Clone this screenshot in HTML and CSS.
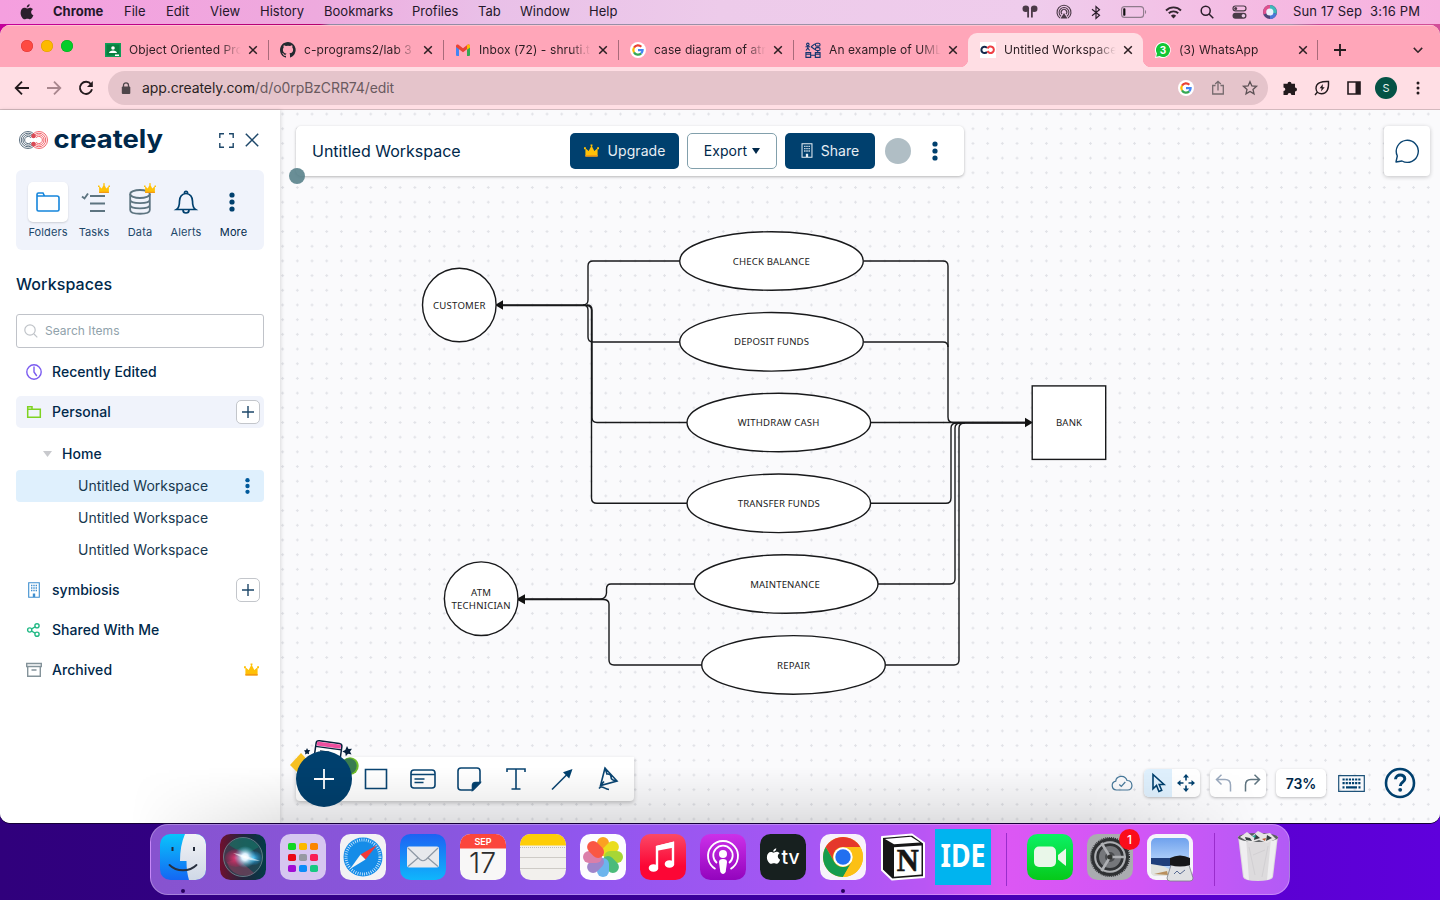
FILE: index.html
```html
<!DOCTYPE html>
<html lang="en">
<head>
<meta charset="utf-8">
<title>Untitled Workspace</title>
<link rel="stylesheet" href="styles.css">
</head>
<body>
<svg class="defs" width="0" height="0">
  <defs>
    <symbol id="crown" viewBox="0 0 16 14"><path fill="#ffc107" d="M1.500 12.500V4L5 7 8 1l3 6 3.500-3v8.500z"/><path fill="#ffc107" d="M0 3h2v2H0zM7 0h2v2H7zM14 3h2v2h-2z"/><path fill="#f39a12" d="M1.500 11.200h13V13h-13z"/></symbol>
    <symbol id="close" viewBox="0 0 10 10"><path d="M1.200 1.200l7.600 7.600M8.800 1.200L1.200 8.800" stroke="#2b1e22" stroke-width="1.500" fill="none"/></symbol>
    <symbol id="google" viewBox="0 0 16 16"><circle cx="8" cy="8" r="8" fill="#fff"/><g fill="none" stroke-width="2.200"><path stroke="#ea4335" d="M4 5.600A4.600 4.600 0 0 1 11.300 4.700"/><path stroke="#fbbc05" d="M4 5.600a4.700 4.700 0 0 0 0 4.800"/><path stroke="#34a853" d="M4 10.400a4.600 4.600 0 0 0 7.200 1"/><path stroke="#4285f4" d="M8 8.200h4.600a4.600 4.600 0 0 1-1.400 3.200"/></g></symbol>
    <symbol id="building" viewBox="0 0 12 16"><path d="M.7.7h10.600v14.600H.7z" fill="none" stroke="currentColor" stroke-width="1.100"/><path d="M3 3.500h1.400M5.300 3.500h1.400M7.600 3.500H9M3 6h1.400M5.300 6h1.400M7.600 6H9M3 8.500h1.400M5.300 8.500h1.400M7.600 8.500H9" stroke="currentColor" stroke-width="1.400"/><path d="M4.800 11.500h2.400V15H4.800z" fill="currentColor"/></symbol>
    <symbol id="dots" viewBox="0 0 6 20"><circle cx="3" cy="3" r="2.600"/><circle cx="3" cy="10" r="2.600"/><circle cx="3" cy="17" r="2.600"/></symbol>
    <symbol id="apple" viewBox="0 0 14 16"><path d="M9.700.2c.1 1.800-1.300 3.300-3 3.300C6.500 1.900 8 .4 9.700.2zM7 4.500c.7 0 1.700-.8 3-.8 1 0 2.200.5 2.900 1.500-2.600 1.600-2.100 5 .5 6.100-.6 1.700-2 4-3.300 4-.9 0-1.500-.6-2.700-.6s-1.900.6-2.800.6C2.900 15.300.6 12 .6 8.900c0-3.200 1.900-5.100 3.800-5.100 1.100 0 2 .7 2.600.7z"/></symbol>
  </defs>
</svg>

<div class="desktop">
  <header class="menubar">
    <svg class="apple" width="14" height="16"><use href="#apple"/></svg>
    <nav class="menus">
      <b>Chrome</b><span>File</span><span>Edit</span><span>View</span><span>History</span><span>Bookmarks</span><span>Profiles</span><span>Tab</span><span>Window</span><span>Help</span>
    </nav>
    <div class="status">
      <svg width="16" height="14" viewBox="0 0 16 14" fill="#4b3a48"><circle cx="3.800" cy="3.800" r="3.300"/><circle cx="12.200" cy="3.800" r="3.300"/><path d="M4.500 5H7v7.500H5.200V6zM9 5h2.500v1l-.7.500v6H9z"/></svg>
      <svg width="16" height="16" viewBox="0 0 16 16" fill="none" stroke="#4b3a48" stroke-width="1.100"><path d="M4 14A7 7 0 1 1 12 14M5 12.200a4.900 4.900 0 1 1 6 0M6 10.200a2.800 2.800 0 1 1 4 0"/><path d="M4.500 14.500L8 9l3.500 5.500z" fill="#4b3a48" stroke="none"/></svg>
      <svg width="10" height="15" viewBox="0 0 10 15" fill="none" stroke="#2b1e2b" stroke-width="1.200"><path d="M1 4.300l7.500 6L5 13.500v-12l3.500 3.200L1 10.700"/></svg>
      <svg width="26" height="12" viewBox="0 0 26 12"><rect x=".6" y=".6" width="22" height="10.800" rx="3" fill="none" stroke="#8f7b8c" stroke-width="1.100"/><rect x="2.200" y="2.200" width="2.200" height="7.600" rx=".8" fill="#111"/><path d="M24 4v4c1.500-.6 1.500-3.400 0-4z" fill="#8f7b8c"/></svg>
      <svg width="17" height="13" viewBox="0 0 17 13" fill="none" stroke="#33262f" stroke-width="1.900"><path d="M1 4.500a10.600 10.600 0 0 1 15 0M3.800 7.300a6.700 6.700 0 0 1 9.400 0"/><path d="M8.500 12.500L5.900 9.700a3.700 3.700 0 0 1 5.200 0z" fill="#33262f" stroke="none"/></svg>
      <svg width="14" height="14" viewBox="0 0 14 14" fill="none" stroke="#2b1e2b" stroke-width="1.500"><circle cx="5.700" cy="5.700" r="4.500"/><path d="M9 9l4.300 4.300"/></svg>
      <svg width="15" height="14" viewBox="0 0 15 14"><rect x="1" y="1" width="13" height="4.800" rx="2.400" fill="none" stroke="#4b3a48" stroke-width="1.200"/><circle cx="3.700" cy="3.400" r="1.500" fill="#4b3a48"/><rect x=".5" y="7.800" width="14" height="6" rx="3" fill="#4b3a48"/><circle cx="11.400" cy="10.800" r="1.800" fill="#e9c9e6"/></svg>
      <svg width="14" height="14" viewBox="0 0 14 14"><circle cx="7" cy="7" r="7" fill="#4d4478"/><path d="M.6 9.500A7 7 0 0 1 7 0v7z" fill="#e0508e"/><path d="M7 0a7 7 0 0 1 6.500 9L7 7z" fill="#3fb9ba"/><path d="M13.500 9a7 7 0 0 1-6.500 5V7z" fill="#4a77d8"/><circle cx="6.800" cy="7" r="3.600" fill="#e9f2fb"/></svg>
      <span class="date">Sun 17 Sep</span><span class="time">3:16 PM</span>
    </div>
  </header>

  <main class="window">
    <div class="tabstrip">
      <div class="lights"><i class="red"></i><i class="amber"></i><i class="green"></i></div>
      <div class="tab"><svg width="16" height="16" viewBox="0 0 16 16"><path fill="#0f9d58" d="M0 1h16v14H0z"/><path fill="#087f3f" d="M1.500 2.500h13v11h-13z"/><circle cx="8" cy="6" r="1.800" fill="#fff"/><path fill="#fff" d="M4 11c0-3.500 8-3.500 8 0zM10 12.500h4V14h-4z"/></svg><span>Object Oriented Pro</span><svg class="x" width="10" height="10"><use href="#close"/></svg></div>
      <div class="tab"><svg width="16" height="16" viewBox="0 0 16 16"><path fill="#24292f" d="M8 0C3.600 0 0 3.600 0 8c0 3.500 2.300 6.500 5.500 7.600.4.100.5-.2.500-.4v-1.400c-2.200.5-2.700-1-2.700-1-.4-.9-.9-1.200-.9-1.200-.7-.5.100-.5.100-.5.800.1 1.200.8 1.200.8.700 1.200 1.900.9 2.300.7.100-.5.300-.9.500-1.100-1.800-.2-3.600-.9-3.600-4 0-.9.300-1.600.8-2.100-.1-.2-.4-1 .1-2.100 0 0 .7-.2 2.200.8a7.600 7.600 0 0 1 4 0c1.500-1 2.200-.8 2.200-.8.4 1.100.2 1.900.1 2.100.5.600.8 1.300.8 2.100 0 3.100-1.900 3.700-3.700 3.900.3.300.6.800.6 1.500v2.200c0 .2.100.5.500.4A8 8 0 0 0 8 0z"/></svg><span>c-programs2/lab 3 (</span><svg class="x" width="10" height="10"><use href="#close"/></svg></div>
      <div class="tab"><svg width="16" height="16" viewBox="0 0 16 16"><path fill="#4285f4" d="M1 4l3 2v8H2a1 1 0 0 1-1-1z"/><path fill="#34a853" d="M15 4l-3 2v8h2a1 1 0 0 0 1-1z"/><path fill="#ea4335" d="M1 4c0-1.500 1.500-2 2.500-1.200L8 6.200l4.500-3.400C13.500 2 15 2.500 15 4v1L8 10.200 1 5z"/><path fill="#fbbc04" d="M12 3.200c1-1 3-.7 3 .8v1.500l-3 2.200z"/></svg><span>Inbox (72) - shruti.t</span><svg class="x" width="10" height="10"><use href="#close"/></svg></div>
      <div class="tab"><svg width="16" height="16"><use href="#google"/></svg><span>case diagram of atm</span><svg class="x" width="10" height="10"><use href="#close"/></svg></div>
      <div class="tab last"><svg width="16" height="17" viewBox="0 0 17 17" fill="none" stroke="#14366f" stroke-width="1.200"><circle cx="3" cy="2" r="1.300"/><path d="M3 3v3M.5 4.500h5M3 6L1 8.500M3 6l2 2.500M6.500 4.500l4-3M6.500 4.500l4 3"/><rect x="11" y=".8" width="5" height="3" rx="1.500"/><rect x="11" y="5.500" width="5" height="3" rx="1.500"/><path d="M1 10.800h5v5H1zM11 10.800h5v5h-5zM1 12.500h5M11 12.500h5M6 13.500h5M13.500 8.500v2"/></svg><span>An example of UML</span><svg class="x" width="10" height="10"><use href="#close"/></svg></div>
      <div class="tab active"><svg width="16" height="16" viewBox="0 0 16 16"><path fill="#fff" d="M0 0h16v16H0z"/><path d="M7 5.800A3.200 3.200 0 1 0 7 10" fill="none" stroke="#14284b" stroke-width="2"/><path d="M7.500 9a3.300 3.300 0 1 0 0-2.500" fill="none" stroke="#ef3f45" stroke-width="2"/></svg><span>Untitled Workspace</span><svg class="x" width="10" height="10"><use href="#close"/></svg></div>
      <div class="tab plain"><svg width="16" height="16" viewBox="0 0 16 16"><path fill="#fff" d="M8 0a8 8 0 1 1-3.600 15.200L0 16l1-4A8 8 0 0 1 8 0z"/><path fill="#12c636" d="M8 1a7 7 0 1 1-3.400 13.100L1.200 14.800l.8-3.200A7 7 0 0 1 8 1z"/><text x="8" y="11.600" text-anchor="middle" font-size="10" font-weight="700" fill="#fff">3</text></svg><span>(3) WhatsApp</span><svg class="x" width="10" height="10"><use href="#close"/></svg></div>
      <svg class="newtab" width="12" height="12" viewBox="0 0 12 12"><path d="M6 0v12M0 6h12" stroke="#231a1d" stroke-width="1.800"/></svg>
      <svg class="chev" width="10" height="7" viewBox="0 0 10 7"><path d="M.8.900L5 5.200 9.200.9" stroke="#33262a" stroke-width="1.600" fill="none"/></svg>
    </div>

    <div class="toolbar">
      <div class="navs">
        <svg width="16" height="16" viewBox="0 0 16 16" fill="none" stroke="#231a1d" stroke-width="1.800"><path d="M15 8H2M8 1.700L1.700 8 8 14.300"/></svg>
        <svg width="16" height="16" viewBox="0 0 16 16" fill="none" stroke="#a8868d" stroke-width="1.800"><path d="M1 8h13M8 1.700L14.300 8 8 14.300"/></svg>
        <svg width="16" height="16" viewBox="0 0 16 16"><path d="M13 4.200A6.100 6.100 0 1 0 14 9.300" fill="none" stroke="#231a1d" stroke-width="1.900"/><path d="M14.800 1v6H9z" fill="#231a1d"/></svg>
      </div>
      <div class="url">
        <svg width="10" height="13" viewBox="0 0 10 13"><rect x=".8" y="4.500" width="8.500" height="7.500" rx="1" fill="#4e464a"/><path d="M2.500 5V3.300a2.500 2.500 0 0 1 5 0V5" fill="none" stroke="#4e464a" stroke-width="1.300"/></svg>
        <span class="addr">app.creately.com<i>/d/o0rpBzCRR74/edit</i></span>
        <svg class="g" width="16" height="16"><use href="#google"/></svg>
        <svg class="s" width="14" height="16" viewBox="0 0 14 16" fill="none" stroke="#756a6e" stroke-width="1.300"><path d="M4.500 5.500H1.700V14h10.600V5.500H9.500M7 10.500V1.500M4.200 4L7 1.300 9.800 4"/></svg>
        <svg width="16" height="16" viewBox="0 0 16 16"><path d="M8 1.700l1.900 4.200 4.600.4-3.500 3.100 1 4.500L8 11.500l-4 2.400 1-4.500L1.500 6.300l4.600-.4z" fill="none" stroke="#5c5155" stroke-width="1.300"/></svg>
      </div>
      <div class="exts">
        <svg width="16" height="16" viewBox="0 0 16 16" fill="#231a1d"><path d="M1.500 3.700h4a2 2 0 1 1 4 0h3.500V7.500a2 2 0 1 1 0 4V15H9.400a1.900 1.900 0 1 0-3.800 0H1.500v-4a1.800 1.800 0 1 0 0-3.600z"/></svg>
        <svg width="16" height="16" viewBox="0 0 16 16" fill="none" stroke="#231a1d" stroke-width="1.400"><path d="M14.500 1.500C8 1.200 2 2.500 2 8.500a5.500 5.500 0 0 0 5.500 5.200c5.500 0 7.500-4.700 7-12.200zM1 15l2.500-3"/><path d="M8.800 4L5.600 8.300h2L7 11.500l3.700-4.300h-2z" fill="#231a1d" stroke="none"/></svg>
        <svg width="14" height="14" viewBox="0 0 14 14"><path d="M1 1h12v12H1z" fill="none" stroke="#231a1d" stroke-width="1.600"/><path d="M8.500 1H13v12H8.500z" fill="#231a1d"/></svg>
        <div class="me">S</div>
        <svg width="4" height="14" viewBox="0 0 4 14" fill="#231a1d"><circle cx="2" cy="2" r="1.500"/><circle cx="2" cy="7" r="1.500"/><circle cx="2" cy="12" r="1.500"/></svg>
      </div>
    </div>

    <div class="app">
      <aside class="sidebar">
        <div class="brand">
          <svg width="148" height="32" viewBox="0 0 148 32">
            <g fill="none" stroke-width=".9"><g stroke="#4a5f70"><path d="M18 10A8.500 8.500 0 1 0 18 22"/><path d="M17 11.300A6.800 6.800 0 1 0 17 20.700"/><path d="M16 12.500A5.200 5.200 0 1 0 16 19.500"/><path d="M15 13.700A3.600 3.600 0 1 0 15 18.300"/></g><g stroke="#f0525a"><path d="M17 22a8.500 8.500 0 1 0 0-12"/><path d="M18 20.700a6.800 6.800 0 1 0 0-9.400"/><path d="M19 19.500a5.200 5.200 0 1 0 0-7"/><path d="M20 18.300a3.600 3.600 0 1 0 0-4.600"/></g></g><circle cx="17.500" cy="12" r="2.300" fill="#d94a55"/><circle cx="17.500" cy="20" r="2.300" fill="#d94a55"/>
            <text x="37.500" y="23.500" class="wordmark" textLength="109.500" lengthAdjust="spacingAndGlyphs">creately</text>
          </svg>
          <svg width="15" height="15" viewBox="0 0 15 15" fill="none" stroke="#1d4769" stroke-width="1.400"><path d="M.8 5V.8H5M10 .8h4.200V5M14.200 10v4.200H10M5 14.200H.8V10"/></svg>
          <svg width="14" height="14" viewBox="0 0 14 14" stroke="#1d4769" stroke-width="1.500"><path d="M.8.800l12.400 12.400M13.200.8L.8 13.200"/></svg>
        </div>
        <div class="apps">
          <div class="item"><div class="pic on"><svg width="24" height="20" viewBox="0 0 24 20" fill="none" stroke="#1585db" stroke-width="1.600"><path d="M1 17.500V2.500Q1 1 2.500 1H7l1.500 3H21q2 0 2 2v11.500q0 1.500-1.500 1.500h-19Q1 19 1 17.500zM1 4h8"/></svg></div><span>Folders</span></div>
          <div class="item"><div class="pic"><svg width="26" height="24" viewBox="0 0 26 24" fill="none" stroke="#5d7480" stroke-width="1.900"><path d="M9 6h15M9 13.500h15M9 21h15M1 6.500l2.500 2L7 3.500"/></svg><svg class="badge" width="12" height="11"><use href="#crown"/></svg></div><span>Tasks</span></div>
          <div class="item"><div class="pic"><svg width="22" height="26" viewBox="0 0 22 26" fill="none" stroke="#5d7480" stroke-width="1.800"><ellipse cx="11" cy="5" rx="9.800" ry="4"/><path d="M1.200 5v16c0 5 19.600 5 19.600 0V5M1.200 10.500c0 4.800 19.600 4.800 19.600 0M1.200 15.800c0 4.800 19.600 4.800 19.600 0"/></svg><svg class="badge" width="12" height="11"><use href="#crown"/></svg></div><span>Data</span></div>
          <div class="item"><div class="pic"><svg width="22" height="24" viewBox="0 0 22 24" fill="none" stroke="#00406e" stroke-width="1.700"><path d="M1.500 19.500c2.500-1.600 3-4 3-8.500 0-4 2.500-7.500 6.500-7.500s6.500 3.500 6.500 7.500c0 4.500.5 6.900 3 8.500zM8 20c0 4 6 4 6 0M9.500 3.500c-.5-3 3.500-3 3 0"/></svg></div><span>Alerts</span></div>
          <div class="item more"><div class="pic"><svg width="6" height="20" fill="#00406e"><use href="#dots"/></svg></div><span>More</span></div>
        </div>
        <h2>Workspaces</h2>
        <div class="search"><svg width="14" height="14" viewBox="0 0 14 14" fill="none" stroke="#bfc3c8" stroke-width="1.200"><circle cx="6" cy="6" r="5.200"/><path d="M10 10l3.300 3.300"/></svg><span>Search Items</span></div>
        <div class="row"><svg width="16" height="16" viewBox="0 0 16 16" fill="none" stroke="#7b5cf0" stroke-width="1.400"><circle cx="8" cy="8" r="7.200"/><path d="M8 2.500V8l2.800 4"/></svg><b>Recently Edited</b></div>
        <div class="row sel"><svg width="16" height="16" viewBox="0 0 16 16" fill="none" stroke="#7ed321" stroke-width="1.500"><path d="M1.700 13.300V2.700H6v2.500h8.300v8.100zM1.700 5.200H6"/></svg><b>Personal</b><div class="plus"><svg width="12" height="12" viewBox="0 0 12 12"><path d="M6 0v12M0 6h12" stroke="#1d4769" stroke-width="1.400"/></svg></div></div>
        <div class="row home"><svg width="9" height="6" viewBox="0 0 9 6"><path d="M0 0h9L4.500 6z" fill="#c8c9cd"/></svg><b>Home</b></div>
        <div class="ws cur"><span>Untitled Workspace</span><svg width="5" height="18" fill="#005a9c"><use href="#dots"/></svg></div>
        <div class="ws"><span>Untitled Workspace</span></div>
        <div class="ws"><span>Untitled Workspace</span></div>
        <div class="row sym"><svg width="16" height="16" color="#3f8fd0"><use href="#building"/></svg><b>symbiosis</b><div class="plus"><svg width="12" height="12" viewBox="0 0 12 12"><path d="M6 0v12M0 6h12" stroke="#1d4769" stroke-width="1.400"/></svg></div></div>
        <div class="row"><svg width="16" height="16" viewBox="0 0 16 16" fill="none" stroke="#22b985" stroke-width="1.400"><circle cx="3.700" cy="8" r="2.100"/><circle cx="11" cy="3.800" r="2.100"/><circle cx="11" cy="12.200" r="2.100"/><path d="M5.500 7l3.600-2.200M5.500 9l3.600 2.200"/></svg><b>Shared With Me</b></div>
        <div class="row"><svg width="16" height="16" viewBox="0 0 16 16" fill="none" stroke="#84939a" stroke-width="1.400"><path d="M.7 1.500h14.600v3H.7zM1.700 4.500h12.600v9.800H1.700zM5.500 8h5"/></svg><b>Archived</b><svg class="rcrown" width="15" height="14"><use href="#crown"/></svg></div>
      </aside>

      <section class="canvas">
        <svg class="diagram" width="1160" height="713" viewBox="280 110 1160 713">
          <g class="wire">
            <path d="M680 261H593Q588 261 588 266V300Q588 305 583 305H500"/>
            <path d="M680 342H593Q588 342 588 337V310Q588 305 583 305"/>
            <path d="M687 422.500H597Q592 422.500 592 417.500V310Q592 305 587 305"/>
            <path d="M687 503.300H597Q591.500 503.300 591.500 498V310Q591.500 305.500 586 305.500H500"/>
            <path d="M864 261H943Q948 261 948 266V417Q948 422.500 953 422.500H1028"/>
            <path d="M864 342H943Q948 342 948 347"/>
            <path d="M871 422.500H1028"/>
            <path d="M871 503.300H946Q951 503.300 951 498V428Q951 423 957 423H1028"/>
            <path d="M878 584H950Q955 584 955 579V428Q955 423 961 423"/>
            <path d="M885.500 665H954Q959 665 959 660V428Q959 423 965 423"/>
            <path d="M695 584H611Q606.500 584 606.500 589V593Q606 599 600 599H520"/>
            <path d="M702 665H614Q609 665 609 660V604Q609 599.500 603 599.500H520"/>
          </g>
          <path class="heads" d="M495 305l8-4.800v9.600zM1033 422.500l-8-4.800v9.600zM516 599.300l9-5v10z"/>
          <g class="shape">
            <circle cx="459.300" cy="305" r="36.800"/><path d="M0 0"/><circle cx="481.200" cy="598.700" r="36.800"/>
            <ellipse cx="771.500" cy="261" rx="91.800" ry="29.300"/><ellipse cx="771.500" cy="341.800" rx="91.800" ry="29.300"/>
            <ellipse cx="778.800" cy="422.500" rx="91.800" ry="29.300"/><ellipse cx="778.800" cy="503.300" rx="91.800" ry="29.300"/>
            <ellipse cx="786.200" cy="584" rx="91.800" ry="29.300"/><ellipse cx="793.500" cy="664.900" rx="91.800" ry="29.300"/>
            <rect x="1032.200" y="385.900" width="73.500" height="73.500"/>
          </g>
          <g class="label">
            <text x="459.300" y="308.600" textLength="52.500">CUSTOMER</text><text x="481" y="596" textLength="20">ATM</text><text x="481" y="608.800" textLength="59">TECHNICIAN</text>
            <text x="771.300" y="264.600" textLength="77">CHECK BALANCE</text><text x="771.500" y="345.400" textLength="75">DEPOSIT FUNDS</text><text x="778.500" y="426.100" textLength="81.500">WITHDRAW CASH</text><text x="778.800" y="506.900" textLength="82">TRANSFER FUNDS</text><text x="785" y="587.700" textLength="69.500">MAINTENANCE</text><text x="793.500" y="668.500" textLength="33">REPAIR</text><text x="1069" y="426.100" textLength="26">BANK</text>
          </g>
        </svg>

        <div class="top">
          <div class="docbar">
            <span class="title">Untitled Workspace</span>
            <button class="btn up"><svg width="15" height="14"><use href="#crown"/></svg>Upgrade</button>
            <button class="btn ex">Export<svg width="8" height="6" viewBox="0 0 8 6"><path d="M0 0h8L4 6z" fill="#00284a"/></svg></button>
            <button class="btn sh"><svg width="12" height="15"><use href="#building"/></svg>Share</button>
            <i class="avatar"></i>
            <svg width="6" height="20" fill="#00406e"><use href="#dots"/></svg>
            <i class="presence"></i>
          </div>
          <div class="comment"><svg width="26" height="26" viewBox="0 0 26 26"><path d="M2 24l1.300-6A11 11 0 1 1 8 23z" fill="none" stroke="#0b4572" stroke-width="1.400" stroke-linejoin="round"/></svg></div>
        </div>

        <div class="bottom">
          <div class="shapes">
            <svg class="decor" width="72" height="46" viewBox="0 0 72 46"><path d="M0 26L11 14 22 26 11 37z" fill="#f6c021"/><g transform="rotate(8 37 20)"><rect x="24" y="3" width="26" height="40" rx="3" fill="#fff" stroke="#06213d" stroke-width="1.500"/><path d="M25 4h24v4H25z" fill="#ed4f9f"/><path d="M24 9h26M29 13h9" stroke="#06213d" stroke-width="1.300"/></g><path d="M57 7l1.500 3 3.500-.3-2 2.800 1.500 3-3.500-.7-2.200 2.400-.5-3.200-3-1.500 3-1.400zM17 9l1 2 2.300.2-1.500 1.800.3 2.200-2-.8-2 1 .2-2.200-1.300-1.600 2.100-.5z" fill="#06213d"/><circle cx="60" cy="27" r="8.700" fill="#6fbe27"/><circle cx="59" cy="27" r="7.700" fill="#397c50"/></svg>
            <div class="fab"><svg width="20" height="20" viewBox="0 0 20 20"><path d="M10 0v20M0 10h20" stroke="#fff" stroke-width="1.800"/></svg></div>
            <svg width="24" height="24" viewBox="0 0 24 24"><path d="M1.500 2.500h21v19h-21z"/></svg>
            <svg width="26" height="24" viewBox="0 0 26 24"><rect x="1" y="3" width="24" height="18" rx="3"/><path d="M1 7.500h24M4.500 12h10M4.500 15.500h9"/></svg>
            <svg width="24" height="24" viewBox="0 0 24 24"><path d="M4 1h16q3 0 3 3v12l-7 7H4q-3 0-3-3V4q0-3 3-3z"/><path d="M23 15.500L15.500 23v-4.500q0-3 3-3z" fill="#00406e"/></svg>
            <svg width="22" height="24" viewBox="0 0 22 24"><path d="M2 5V2h18v3M11 2v20M6.500 22h9"/></svg>
            <svg width="24" height="24" viewBox="0 0 24 24"><path d="M2 22.500L17 7.500"/><path d="M22.500 2l-3.300 9.500-6.200-6.200z" fill="#00406e" stroke="none"/></svg>
            <svg width="22" height="24" viewBox="0 0 22 24"><path d="M8 1L3.500 18.500 20 14zM8 1l2 6q4-.5 4 3t6 4M3.500 18.500l3.500-4M2 21.500c3-4 5 .5 10 1"/></svg>
          </div>
          <div class="views">
            <svg width="22" height="18" viewBox="0 0 22 18" fill="none" stroke="#47799b" stroke-width="1.200"><path d="M5.500 16a4.500 4.500 0 0 1-.7-8.900C5 2.500 13.500-.5 16 6.500c6 0 7 9.500.5 9.500zM8.300 10.500l2 2 4-4.500"/></svg>
            <div class="group"><div class="cell hot"><svg width="14" height="20" viewBox="0 0 14 20"><path d="M2 1.500v14.300l3.500-3.300 2.400 6 2.800-1.200-2.500-5.800H13z" fill="none" stroke="#00406e" stroke-width="1.600"/></svg></div><div class="cell"><svg width="18" height="18" viewBox="0 0 18 18"><path d="M9 2.500V6.500M9 11.500v4M2.500 9h4M11.500 9h4" stroke="#00406e" stroke-width="1.600"/><path d="M9 0l3 3.500H6zM9 18l3-3.500H6zM0 9l3.500-3v6zM18 9l-3.500-3v6z" fill="#00406e"/></svg></div></div>
            <div class="group"><div class="cell"><svg width="18" height="18" viewBox="0 0 18 18" fill="none" stroke="#9aa9bd" stroke-width="1.500"><path d="M6.500.8L1.500 5.500l5 5M1.500 5.500H10q5.500 0 5.500 5.500v6.500"/></svg></div><div class="cell"><svg width="18" height="18" viewBox="0 0 18 18" fill="none" stroke="#5f747f" stroke-width="1.500"><path d="M11.500.8l5 4.700-5 5M16.500 5.500H8Q2.500 5.500 2.500 11v6.500"/></svg></div></div>
            <div class="group pct">73%</div>
            <svg class="kbd" width="27" height="17" viewBox="0 0 27 17"><path d="M.7.700h25.600v15.600H.7z" fill="none" stroke="#1d5279" stroke-width="1.200"/><path d="M4.500 4.500h18M4.500 8.200h18" stroke="#00406e" stroke-width="2.200" stroke-dasharray="2.200 .95"/><path d="M4.500 12.300h2M8 12.300h11M20.500 12.300h2" stroke="#00406e" stroke-width="2.200"/></svg>
            <svg width="32" height="32" viewBox="0 0 32 32"><circle cx="16" cy="16" r="14" fill="none" stroke="#00406e" stroke-width="2.600"/><path d="M11.500 12.300c.2-5.800 9.500-5.500 9.300-.3-.1 3.200-4.500 3.200-4.500 7" fill="none" stroke="#00406e" stroke-width="3"/><circle cx="16.200" cy="22.800" r="1.900" fill="#00406e"/></svg>
          </div>
        </div>
      </section>
      <div class="dockshade"></div>
    </div>
  </main>

  <footer class="dock">
    <div class="app-icon run"><svg viewBox="0 0 46 46"><defs><linearGradient id="fb" x2="0" y2="1"><stop stop-color="#09c4fb"/><stop offset="1" stop-color="#1467f3"/></linearGradient><linearGradient id="fw" x2="0" y2="1"><stop stop-color="#f2f3f6"/><stop offset="1" stop-color="#cfd8e6"/></linearGradient></defs><rect width="46" height="46" rx="10.500" fill="url(#fb)"/><path d="M25 0h10.500A10.500 10.500 0 0 1 46 10.500v25A10.500 10.500 0 0 1 35.500 46H29c-1.500-5-2.500-11-2.500-19H20C20 17 21.500 8 25 0z" fill="url(#fw)"/><path d="M12.500 13v4M34 13v4" stroke="#222a38" stroke-width="2"/><path d="M9.500 31c7 7 20 7 27 0" fill="none" stroke="#27303f" stroke-width="1.800" stroke-linecap="round"/></svg></div>
    <div class="app-icon"><svg viewBox="0 0 46 46"><defs><linearGradient id="s1"><stop stop-color="#70102f"/><stop offset=".5" stop-color="#22243c"/><stop offset="1" stop-color="#033c48"/></linearGradient><radialGradient id="s2"><stop stop-color="#fff"/><stop offset=".3" stop-color="#dff3ff"/><stop offset="1" stop-color="#48bce0" stop-opacity="0"/></radialGradient><radialGradient id="s3"><stop stop-color="#f03b78"/><stop offset="1" stop-color="#c81d58" stop-opacity=".2"/></radialGradient><radialGradient id="s4"><stop stop-color="#49c8ff"/><stop offset="1" stop-color="#177bb8" stop-opacity=".2"/></radialGradient></defs><rect width="46" height="46" rx="10.500" fill="url(#s1)"/><circle cx="23" cy="23" r="19.500" fill="#2c5661" fill-opacity=".55" stroke="#7d9aa0" stroke-width=".7"/><path d="M9 11C17 0 31 2 39 13L25 21z" fill="#127b68" opacity=".55"/><path d="M18 25l16 14C24 46 9 39 7 28z" fill="#a0405f" opacity=".45"/><ellipse cx="16" cy="24" rx="11" ry="9" fill="url(#s3)"/><ellipse cx="33" cy="24" rx="9" ry="7" fill="url(#s4)"/><circle cx="25" cy="23" r="11" fill="url(#s2)"/><path d="M13 19q12 2 27 8-13 0-27-8z" fill="#fff" opacity=".6"/></svg></div>
    <div class="app-icon"><svg viewBox="0 0 46 46"><rect width="46" height="46" rx="10.500" fill="#d6c6f0"/><g><rect x="8" y="9" width="8" height="7" rx="1.800" fill="#10d624"/><rect x="19" y="9" width="8" height="7" rx="1.800" fill="#fcb900"/><rect x="30" y="9" width="8" height="7" rx="1.800" fill="#fb8600"/><rect x="8" y="20" width="8" height="7" rx="1.800" fill="#ea0716"/><rect x="19" y="20" width="8" height="7" rx="1.800" fill="#9699a3"/><rect x="30" y="20" width="8" height="7" rx="1.800" fill="#f91c54"/><rect x="8" y="31" width="8" height="7" rx="1.800" fill="#a10cd5"/><rect x="19" y="31" width="8" height="7" rx="1.800" fill="#0d8cf8"/><rect x="30" y="31" width="8" height="7" rx="1.800" fill="#16c982"/></g></svg></div>
    <div class="app-icon"><svg viewBox="0 0 46 46"><rect width="46" height="46" rx="10.500" fill="#f3f2f4"/><circle cx="23" cy="23" r="19.500" fill="#158ce8"/><circle cx="23" cy="23" r="17" fill="none" stroke="#d8efff" stroke-width="3" stroke-dasharray=".8 1.430"/><path d="M37 11L25.500 25.500l-5-5z" fill="#f23b38"/><path d="M10 35l10.500-14.500 5 5z" fill="#f4f4f4"/></svg></div>
    <div class="app-icon"><svg viewBox="0 0 46 46"><defs><linearGradient id="ml" x2="0" y2="1"><stop stop-color="#1d62f3"/><stop offset="1" stop-color="#0fb6fc"/></linearGradient></defs><rect width="46" height="46" rx="10.500" fill="url(#ml)"/><rect x="7" y="12.500" width="32" height="21" rx="2" fill="#e7e9ed"/><path d="M8 14l12 11.500q3 2.500 6 0L38 14M8 32.500l10.500-9M38 32.500l-10.500-9" fill="none" stroke="#8d98a5" stroke-width="1.200"/></svg></div>
    <div class="app-icon"><svg viewBox="0 0 46 46"><rect width="46" height="46" rx="10.500" fill="#f8f7f7"/><path d="M0 14.500v-4A10.500 10.500 0 0 1 10.500 0h25A10.500 10.500 0 0 1 46 10.500v4z" fill="#fb463c"/><text x="23" y="11.300" text-anchor="middle" font-size="9" font-weight="600" fill="#fff">SEP</text><text x="22.500" y="38.500" text-anchor="middle" font-size="29" font-weight="300" fill="#2c2c2e" textLength="27" lengthAdjust="spacingAndGlyphs">17</text></svg></div>
    <div class="app-icon"><svg viewBox="0 0 46 46"><rect width="46" height="46" rx="10.500" fill="#f2f0ed"/><path d="M0 11.500v-1A10.500 10.500 0 0 1 10.500 0h25A10.500 10.500 0 0 1 46 10.500v1z" fill="#fecd06"/><path d="M0 13.500h46" stroke="#c1bdb2" stroke-width="1" stroke-dasharray="1 1"/><path d="M0 23.500h46M0 34.500h46" stroke="#cecbc6"/></svg></div>
    <div class="app-icon"><svg viewBox="0 0 46 46"><rect width="46" height="46" rx="10.500" fill="#fdfcff"/><g transform="translate(23 23)" opacity=".95"><rect x="-6" y="-20" width="12" height="19" rx="6" fill="#fb9d17"/><rect x="-6" y="-20" width="12" height="19" rx="6" fill="#e9dc13" transform="rotate(45)"/><rect x="-6" y="-20" width="12" height="19" rx="6" fill="#a3d42b" transform="rotate(90)"/><rect x="-6" y="-20" width="12" height="19" rx="6" fill="#42b874" transform="rotate(135)"/><rect x="-6" y="-20" width="12" height="19" rx="6" fill="#65b1ed" transform="rotate(180)"/><rect x="-6" y="-20" width="12" height="19" rx="6" fill="#9b7fc9" transform="rotate(225)"/><rect x="-6" y="-20" width="12" height="19" rx="6" fill="#da79a5" transform="rotate(270)"/><rect x="-6" y="-20" width="12" height="19" rx="6" fill="#fa4f39" transform="rotate(315)"/></g></svg></div>
    <div class="app-icon"><svg viewBox="0 0 46 46"><defs><linearGradient id="mu" x2="0" y2="1"><stop stop-color="#fb4966"/><stop offset=".7" stop-color="#fc0635"/></linearGradient></defs><rect width="46" height="46" rx="10.500" fill="url(#mu)"/><path d="M17 33V13l16-4v20" fill="none" stroke="#fff" stroke-width="2.400"/><path d="M16 12l18-4.500v6L16 17z" fill="#fff"/><ellipse cx="13.500" cy="34" rx="4.800" ry="3.800" fill="#fff"/><ellipse cx="29.500" cy="30" rx="4.800" ry="3.800" fill="#fff"/></svg></div>
    <div class="app-icon"><svg viewBox="0 0 46 46"><defs><linearGradient id="po" x2="0" y2="1"><stop stop-color="#cc30e9"/><stop offset="1" stop-color="#9304bd"/></linearGradient></defs><rect width="46" height="46" rx="10.500" fill="url(#po)"/><g fill="none" stroke="#fff" stroke-width="1.800"><path d="M15.500 35a15 15 0 1 1 15 0M17 29a9.700 9.700 0 1 1 12 0"/></g><circle cx="23" cy="20" r="4" fill="#fff"/><path d="M19 28q0-3 4-3t4 3l-1.300 10q-2.700 4-5.400 0z" fill="#fff"/></svg></div>
    <div class="app-icon"><svg viewBox="0 0 46 46"><rect width="46" height="46" rx="10.500" fill="#17201f"/><svg x="6" y="14" width="15" height="16.500" fill="#fff"><use href="#apple"/></svg><text x="21.500" y="30" font-size="20" font-weight="500" fill="#fff" textLength="18" lengthAdjust="spacingAndGlyphs">tv</text></svg></div>
    <div class="app-icon run"><svg viewBox="0 0 46 46"><rect width="46" height="46" rx="10.500" fill="#f8f2fb"/><circle cx="23" cy="23" r="20" fill="#fcc015"/><path d="M5.700 13A20 20 0 0 1 40.300 13H23a10 10 0 0 0-8.700 15z" fill="#e5382b"/><path d="M5.700 13A20 20 0 0 0 23 43l8.700-15A10 10 0 0 1 14.300 28z" fill="#159c4e"/><path d="M40.300 13A20 20 0 0 1 23 43l8.700-15A10 10 0 0 0 23 13z" fill="#fcc015"/><circle cx="23" cy="23" r="9.700" fill="#fff"/><circle cx="23" cy="23" r="7.700" fill="#226ff0"/></svg></div>
    <div class="app-icon"><svg viewBox="0 0 46 46"><path d="M2 3L32 0.500 44 9V43L12 45.500 2 36z" fill="#161616" stroke="#fff" stroke-width="2" stroke-linejoin="round"/><path d="M5 5l26-2.200L40 8.500 14 10.300z" fill="#fff"/><path d="M14 13.200l27.500-1.800V40.500L14 42.800z" fill="#fff"/><text x="27.700" y="37.300" text-anchor="middle" class="serif" font-size="31" font-weight="700" fill="#161616" stroke="#161616" stroke-width=".6" textLength="22" lengthAdjust="spacingAndGlyphs">N</text></svg></div>
    <div class="app-icon ide"><svg viewBox="0 0 56 56"><text x="28" y="37.500" text-anchor="middle" textLength="45" lengthAdjust="spacingAndGlyphs">IDE</text></svg></div>
    <i class="rule"></i>
    <div class="app-icon"><svg viewBox="0 0 46 46"><defs><linearGradient id="ft" x2="0" y2="1"><stop stop-color="#0bf165"/><stop offset="1" stop-color="#06c91a"/></linearGradient></defs><rect width="46" height="46" rx="10.500" fill="url(#ft)"/><rect x="7" y="12.500" width="22" height="20.500" rx="5" fill="#e9f7e9"/><path d="M31 21q6-5 8-6.500v17.500q-2-1.500-8-6.500z" fill="#e9f7e9"/></svg></div>
    <div class="app-icon"><svg viewBox="0 0 46 46"><rect width="46" height="46" rx="10.500" fill="#aaacb0"/><circle cx="23" cy="23" r="17.500" fill="#75777b" stroke="#2e3033" stroke-width="3"/><circle cx="23" cy="23" r="19.400" fill="none" stroke="#2e3033" stroke-width="1.300" stroke-dasharray="1 1"/><circle cx="23" cy="23" r="12.500" fill="none" stroke="#303235" stroke-width="3"/><circle cx="23" cy="23" r="5" fill="#4a4c4f"/><path d="M23 23h16M23 23L14.500 9M23 23l-8.500 14" stroke="#aeb0b4" stroke-width="2.600"/><circle cx="23" cy="23" r="14.700" fill="none" stroke="#aeb0b4" stroke-width="1.800"/><circle cx="23" cy="23" r="2.500" fill="#333"/></svg><b class="count">1</b></div>
    <div class="app-icon"><svg viewBox="0 0 46 46"><defs><linearGradient id="sk" x2="0" y2="1"><stop stop-color="#6fa1ed"/><stop offset=".62" stop-color="#b2d2fa"/></linearGradient></defs><rect width="46" height="46" rx="9" fill="#f6f4fa"/><rect x="4" y="4" width="38" height="38" rx="5" fill="url(#sk)"/><path d="M4 24h38v8H4z" fill="#1f3f7b"/><path d="M4 30l12 2 6 3v7H9q-5 0-5-4z" fill="#e2e4df"/><path d="M7 40l13-3 1 4z" fill="#b98f5e"/><path d="M24 31h18l4 13q0 3-3 3H23q-3 0-3-3z" fill="#dfe0e3" stroke="#7a7e85" stroke-width=".8"/><path d="M23 24q10-5 20 0v7q-10 3-20 0z" fill="#171719"/><path d="M27 40l3-3 3 3 5-4" fill="none" stroke="#5b6c93"/></svg></div>
    <i class="rule two"></i>
    <div class="app-icon"><svg viewBox="0 0 46 52" class="trash"><path d="M3 6l5 41q1 4 15 4t15-4l5-41z" fill="#dddbdd"/><path d="M4 6l5 41q3 3 5 3L11 7zM42 6l-5 41q-3 3-5 3l4-42z" fill="#efeef0"/><ellipse cx="23" cy="7.500" rx="20" ry="4.500" fill="#5b5f62"/><path d="M5 7l7-5 5 4 6-5 6 3 6-1 6 6-9 4-8-3-9 3z" fill="#e7e5e5"/><path d="M10 7l5 1 2 3-6-1zM20 4l5 4-6 2zM32 5l5 3-6 3z" fill="#343d40"/><path d="M17 6l4-1-1 3z" fill="#22a896"/><path d="M27 9l4-1-1 3z" fill="#bd5d35"/><path d="M14 17l6 28M33 16l-6 31M18 25l12-5" stroke="#d2d0d3" stroke-width="1"/></svg></div>
  </footer>
</div>
</body>
</html>
```

FILE: styles.css
```css
* { box-sizing: border-box; }
body { margin: 0; font-family: Inter, "Liberation Sans", sans-serif; overflow: hidden; }
svg { display: block; flex: none; overflow: visible; }
svg text { font-family: Inter, sans-serif; }
i { font-style: normal; }
.defs { position: absolute; }

.desktop { width: 1440px; height: 900px; display: flex; flex-direction: column; overflow: hidden;
  background:
    linear-gradient(90deg, #c4009b 0, #b4006f 320px, #8f8ba5 330px, #a89aac 1290px, #c94798 1320px, #d24e98 100%) 0 0 / 100% 60px no-repeat,
    linear-gradient(90deg, #30007c 0, #33008b 35%, #4200ae 65%, #5b00d2 88%, #5f00dc 100%); }

/* macOS menu bar */
.menubar { height: 24px; margin-bottom: 1px; flex: none; display: flex; align-items: center; padding-left: 20px; font-size: 13px; line-height: 22px; color: #24172a;
  background: linear-gradient(90deg, #f59fdf 0, #eeaade 22%, #e9c0e8 34%, #edcbea 50%, #efccec 72%, #f5bae2 88%, #f7b1df 100%); }
.apple { fill: #2b1e2b; margin-top: -1px; }
.menus { height: 24px; display: grid; grid-template-columns: 71px 42px 44px 50px 64px 88px 66px 42px 69px 40px; margin-left: 19px; }
.menus b { font-weight: 700; letter-spacing: 0; }
.menus span { letter-spacing: .02px; }
.status { margin-left: auto; display: flex; align-items: center; padding-right: 18px; }
.status svg:nth-child(1) { margin-right: 18px; }
.status svg:nth-child(2) { margin-right: 19px; }
.status svg:nth-child(3) { margin-right: 20px; }
.status svg:nth-child(4) { margin-right: 18px; }
.status svg:nth-child(5) { margin-right: 18px; }
.status svg:nth-child(6) { margin-right: 18px; }
.status svg:nth-child(7) { margin-right: 16px; }
.status svg:nth-child(8) { margin-right: 16px; }
.date { width: 77px; height: 24px; letter-spacing: .15px; white-space: nowrap; }
.time { width: 52px; height: 24px; letter-spacing: .2px; white-space: nowrap; }

/* browser window */
.window { height: 798px; flex: none; display: flex; flex-direction: column; border-radius: 10px; overflow: hidden; background: #fff; box-shadow: 0 1px 0 #160038; }
.tabstrip { height: 42px; flex: none; display: flex; align-items: center; background: #ffa6b9; box-shadow: inset 0 1px #ffc4d2; }
.lights { width: 93px; flex: none; display: flex; gap: 8px; padding-left: 21px; }
.lights i { width: 12px; height: 12px; border-radius: 50%; }
.red { background: #fe4a42; box-shadow: inset 0 0 0 .5px #d93434; }
.amber { background: #fdb900; box-shadow: inset 0 0 0 .5px #d99a00; }
.green { background: #04cd2a; box-shadow: inset 0 0 0 .5px #02a81e; }
.tab { width: 175px; height: 34px; margin-top: 8px; padding: 0 10px 0 12px; flex: none; display: flex; align-items: center; position: relative; font-size: 12px; letter-spacing: .1px; color: #2b1d22; }
.tab span { width: 114px; height: 17px; line-height: 15px; margin-left: 8px; overflow: hidden; white-space: nowrap; -webkit-mask-image: linear-gradient(90deg, #000 80%, transparent 98%); mask-image: linear-gradient(90deg, #000 80%, transparent 98%); }
.tab .x { margin-left: 5px; }
.tab::after { content: ""; position: absolute; right: -1px; top: 7px; width: 1px; height: 20px; background: #a86b7a; }
.tab.active { background: #ffdee4; border-radius: 9px 9px 0 0; }
.tab.active::after, .tab.last::after { display: none; }
.tab.plain::after { right: 0; }
.tab.active::before { content: ""; position: absolute; left: -8px; right: -8px; bottom: 0; height: 8px; background: radial-gradient(circle at 0 0, transparent 8px, #ffdee4 8.500px) left / 8px 8px no-repeat, radial-gradient(circle at 100% 0, transparent 8px, #ffdee4 8.500px) right / 8px 8px no-repeat; }
.newtab { margin: 8px 0 0 16px; }
.chev { margin: 8px 0 0 67px; }
.toolbar { height: 43px; flex: none; display: flex; align-items: center; background: #ffdee4; border-bottom: 1px solid #d3b9be; }
.navs { width: 108px; display: flex; gap: 16px; padding-left: 14px; }
.url { width: 1160px; height: 34px; border-radius: 17px; background: #e5c4cb; display: flex; align-items: center; gap: 16px; padding: 0 10px 0 13px; }
.url .g { margin-right: 1px; }
.url .s { margin-right: 1px; }
.addr { margin: -2px auto 0 -5px; font-size: 14px; letter-spacing: -.09px; color: #2a1f23; }
.addr i { color: #6a5a5f; }
.exts { display: flex; align-items: center; gap: 16px; padding-left: 14px; }
.exts svg:nth-child(3) { margin-left: 1px; }
.me { width: 22px; height: 22px; margin-left: -2px; border-radius: 50%; background: #045245; color: #e9f3f0; font-size: 11px; line-height: 22px; text-align: center; }
.exts svg:last-child { margin-left: 3px; }

.app { flex: 1; display: flex; position: relative; }

/* workspace sidebar */
.sidebar { width: 280px; flex: none; padding: 14px 16px 0; background: #fff; color: #00284a; z-index: 1; box-shadow: 1px 0 4px rgba(0,0,0,.13); }
.brand { display: flex; align-items: center; height: 32px; }
.brand svg:nth-child(2) { margin-left: 55px; }
.brand svg:nth-child(3) { margin-left: 11px; }
svg .wordmark { font-size: 25px; font-weight: 700; fill: #00284a; }
.apps { height: 80px; margin-top: 14px; padding: 12px 9px 0; border-radius: 6px; background: #f0f3fb; display: flex; }
.item { width: 46px; flex: none; display: flex; flex-direction: column; align-items: center; font-size: 11px; color: #1d4769; }
.item span { margin-top: 4px; line-height: 13px; letter-spacing: .1px; }
.item.more { color: #00284a; }
.item.more span { margin-left: 3px; }
.pic { width: 40px; height: 40px; display: flex; align-items: center; justify-content: center; position: relative; border-radius: 5px; }
.pic.on { background: #fff; box-shadow: 0 1px 2px rgba(0,0,0,.15); }
.item .badge { position: absolute; right: 4px; top: 1px; }
h2 { margin: 23px 0 0; font-size: 16px; line-height: 22px; font-weight: 500; letter-spacing: .1px; }
.search { height: 34px; margin-top: 19px; border: 1px solid #c0c3c9; border-radius: 3px; display: flex; align-items: center; gap: 7px; padding-left: 7px; font-size: 12px; letter-spacing: .02px; color: #90a2ab; }
.search span { margin-top: -2px; }
.row { height: 32px; margin-top: 8px; padding: 0 4px 0 10px; display: flex; align-items: center; gap: 10px; border-radius: 5px; font-size: 14px; }
.row b { font-weight: 500; letter-spacing: .04px; margin: -2px auto 0 0; }
.row.sel { background: #f0f3fb; }
.row.home { margin-top: 10px; padding-left: 27px; gap: 10px; }
.plus { width: 24px; height: 24px; border: 1px solid #c3c6cb; border-radius: 5px; background: #fff; display: grid; place-items: center; }
.rcrown { margin-right: 1px; }
.ws { height: 32px; padding: 0 14px 0 62px; display: flex; align-items: center; justify-content: space-between; border-radius: 4px; font-size: 14px; letter-spacing: 0; color: #17384f; }
.ws span { margin-top: -2px; }
.ws.cur { background: #dff0fd; }

/* drawing surface */
.canvas { width: 1160px; position: relative; display: flex; flex-direction: column; justify-content: space-between; background: radial-gradient(circle, #e1e2e7 0, #e1e2e7 1px, transparent 1.400px) 10px -3.300px / 14.690px 14.690px #fafafc; }
.diagram { position: absolute; inset: 0; }
.wire path { fill: none; stroke: #18191b; stroke-width: 1.400; }
.heads { fill: #111; }
.shape * { fill: #fff; stroke: #18191b; stroke-width: 1.400; }
svg .label text { font: 9.600px "Noto Sans", sans-serif; fill: #222; text-anchor: middle; }
.top { position: relative; display: flex; justify-content: space-between; padding: 16px 10px 0 16px; }
.docbar { width: 668px; height: 50px; position: relative; display: flex; align-items: center; padding: 0 0 0 16px; background: #fff; border-radius: 5px; box-shadow: 0 1px 3px rgba(0,0,0,.28); }
.title { width: 258px; font-size: 16px; letter-spacing: 0; color: #00284a; }
.btn { height: 36px; border: 0; border-radius: 5px; padding: 0 0 1px; display: flex; align-items: center; justify-content: center; font: 14px Inter, sans-serif; letter-spacing: .05px; }
.up { width: 109px; margin-right: 8px; gap: 9px; background: #00406e; color: #e7eef4; }
.ex { width: 90px; margin-right: 8px; gap: 5px; background: #fff; border: 1px solid #82a0ac; color: #00284a; }
.sh { width: 90px; margin-right: 10px; gap: 8px; background: #00406e; color: #e7eef4; }
.avatar { width: 26px; height: 26px; margin-right: 21px; border-radius: 50%; background: #b0bec5; }
.presence { position: absolute; left: -7px; bottom: -8px; width: 16px; height: 16px; border-radius: 50%; background: rgba(84,126,135,.88); }
.comment { width: 46px; height: 50px; background: #fff; border-radius: 4px; display: grid; place-items: center; box-shadow: 0 1px 4px rgba(0,0,0,.22); }
.bottom { position: relative; display: flex; justify-content: space-between; padding: 0 24px 22px 16px; align-items: flex-end; }
.shapes { width: 338px; height: 44px; position: relative; display: flex; align-items: center; background: #fff; border-radius: 0 0 4px 4px; box-shadow: 0 2px 4px rgba(0,0,0,.22); }
.shapes > svg { fill: none; stroke: #0a4572; stroke-width: 1.600; margin-right: 22px; }
.shapes > svg:nth-child(4) { margin-right: 21px; }
.shapes > svg:nth-child(5) { margin-right: 24px; }
.shapes > svg:nth-child(6) { margin-right: 23px; }
.shapes > svg:nth-child(7) { margin-right: 23px; }
.shapes > svg:nth-child(8) { margin-right: 0; }
.shapes > svg.decor { position: absolute; left: -6px; top: -18px; stroke: none; margin: 0; }
.fab { width: 56px; height: 56px; margin-right: 12px; border-radius: 50%; background: #00406e; position: relative; flex: none; display: grid; place-items: center; }
.views { display: flex; align-items: center; gap: 10px; height: 32px; margin-bottom: 2px; }
.views > svg:first-child { margin-right: 1px; }
.group { display: flex; height: 28px; border-radius: 5px; background: #fff; box-shadow: 0 1px 3px rgba(0,0,0,.25); overflow: hidden; }
.cell { width: 28px; display: grid; place-items: center; }
.hot { background: #dff0fd; }
.pct { width: 50px; justify-content: center; align-items: center; font-size: 14px; font-weight: 600; color: #00284a; letter-spacing: -.1px; }
.kbd { margin: 0 9px 0 2px; }
.dockshade { position: absolute; z-index: 2; left: 130px; width: 1130px; bottom: 0; height: 56px; pointer-events: none; background: linear-gradient(0deg, rgba(0,0,0,.11), rgba(0,0,0,.06) 40%, transparent); -webkit-mask-image: linear-gradient(90deg, transparent, #000 14%, #000 85%, transparent); mask-image: linear-gradient(90deg, transparent, #000 14%, #000 85%, transparent); }

/* dock */
.dock { width: 1140px; height: 71px; flex: none; margin: 1px 0 0 150px; padding: 0 0 5px 10px; display: flex; align-items: center; border-radius: 18px; border: 1px solid rgba(255,255,255,.28);
  background: linear-gradient(90deg, #8753cf 0, #8956df 26%, #9156ee 38%, #a657f4 58%, #b956f4 68%, #dc57f4 75%, #d156f6 87%, #b25bf6 100%); }
.app-icon { width: 46px; height: 46px; margin: 0 14px 0 0; flex: none; position: relative; }
.app-icon:first-child { margin-left: -1px; }
.app-icon svg { width: 46px; height: 46px; }
.app-icon svg svg { width: 15px; height: 16.500px; }
.run::after { content: ""; position: absolute; left: 21px; bottom: -13px; width: 4px; height: 4px; border-radius: 50%; background: #26005e; }
svg .serif { font-family: "Liberation Serif", serif; }
.ide { width: 56px; height: 56px; margin: 0 15px 0 -5px; background: #00b4ef; }
.app-icon.ide svg { width: 56px; height: 56px; }
.ide text { font: 700 32px "Noto Sans", sans-serif; fill: #fff; }
.rule { width: 1px; height: 53px; flex: none; margin: 5px 20px 0 0; background: #9a2dcc; }
.rule.two { margin-left: 7px; }
.count { position: absolute; right: -7px; top: -5px; width: 21px; height: 21px; border-radius: 50%; background: #fb0d1b; color: #fff; font-size: 12px; font-weight: 500; line-height: 21px; text-align: center; }
.app-icon .trash { width: 46px; height: 54px; margin-top: -5px; }
```
